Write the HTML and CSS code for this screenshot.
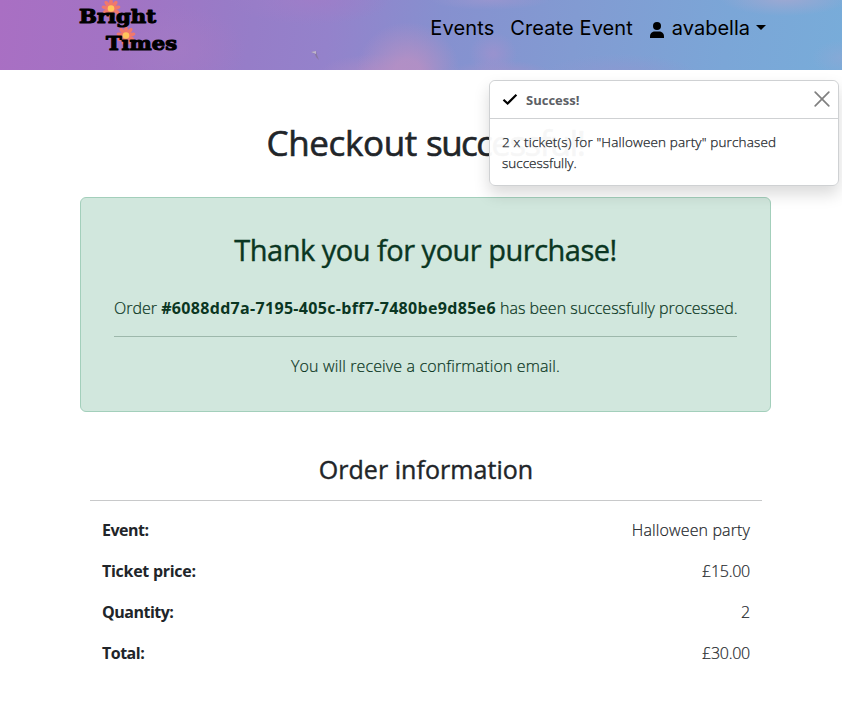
FILE: index.html
```html
<!DOCTYPE html>
<html lang="en">
<head>
<meta charset="utf-8">
<title>Bright Times - Checkout</title>
<link rel="stylesheet" href="styles.css">
</head>
<body>
<header class="navbar">
  <a class="logo">
    <svg width="104" height="56" viewBox="0 0 104 56">
      <defs>
        <g id="petals" fill="#f0786c">
          <ellipse cy="-5.500" rx="1.900" ry="4"/>
          <ellipse cy="-5.500" rx="1.900" ry="4" transform="rotate(40)"/>
          <ellipse cy="-5.500" rx="1.900" ry="4" transform="rotate(80)"/>
          <ellipse cy="-5.500" rx="1.900" ry="4" transform="rotate(120)"/>
          <ellipse cy="-5.500" rx="1.900" ry="4" transform="rotate(160)"/>
          <ellipse cy="-5.500" rx="1.900" ry="4" transform="rotate(200)"/>
          <ellipse cy="-5.500" rx="1.900" ry="4" transform="rotate(240)"/>
          <ellipse cy="-5.500" rx="1.900" ry="4" transform="rotate(280)"/>
          <ellipse cy="-5.500" rx="1.900" ry="4" transform="rotate(320)"/>
        </g>
      </defs>
      <use href="#petals" x="34" y="8.500"/>
      <use href="#petals" x="49" y="35.500"/>
      <text class="logo-text" x="2" y="22.700" textLength="77" lengthAdjust="spacingAndGlyphs">Brıght</text>
      <text class="logo-text" x="29" y="49.700" textLength="71" lengthAdjust="spacingAndGlyphs">Tımes</text>
      <circle cx="34" cy="8.500" r="3.300" fill="#ffc65c"/>
      <circle cx="49" cy="35.500" r="3.300" fill="#ffc65c"/>
    </svg>
  </a>
  <svg class="bird" width="10" height="12" viewBox="0 0 10 12"><path d="M0 2 5 1 6 5 8 10 5 7 4 4Z" fill="#8878a0"/><path d="M0 2 5 1 5 4Z" fill="#c0b6cc"/></svg>
  <nav class="links">
    <a class="events">Events</a>
    <a class="create">Create Event</a>
    <a class="user">
      <svg width="14" height="16" viewBox="0 0 14 16"><circle cx="7" cy="4" r="4"/><path d="M0 16v-1.6C0 11.300 2.300 9.500 5 9.500h4c2.700 0 5 1.800 5 4.900V16Z"/></svg>
      <span class="username">avabella</span>
      <span class="caret"></span>
    </a>
  </nav>
</header>

<main>
  <h1><span class="h1-first">Checkout</span> <span class="h1-second">successful!</span></h1>
  <section class="alert">
    <h2>Thank you for your purchase!</h2>
    <p class="order-line">Order <strong>#6088dd7a-7195-405c-bff7-7480be9d85e6</strong> has been successfully processed.</p>
    <hr>
    <p class="mail-line">You will receive a confirmation email.</p>
  </section>
  <section class="order">
    <h3>Order information</h3>
    <dl>
      <div class="row"><dt>Event:</dt><dd class="name">Halloween party</dd></div>
      <div class="row"><dt class="price">Ticket price:</dt><dd>£15.00</dd></div>
      <div class="row"><dt>Quantity:</dt><dd>2</dd></div>
      <div class="row"><dt>Total:</dt><dd>£30.00</dd></div>
    </dl>
  </section>
</main>

<aside class="toast">
  <div class="toast-header">
    <svg width="16" height="14" viewBox="0 0 16 14"><path d="M1.500 6.700 5.600 10.500 14.400 1.800" fill="none" stroke="#000" stroke-width="2.200"/></svg>
    <strong>Success!</strong>
    <svg class="close" width="16" height="16" viewBox="0 0 16 16"><path d="M1.200 1.200 14.800 14.800M14.800 1.200 1.200 14.800" stroke="#808080" stroke-width="1.700" stroke-linecap="round"/></svg>
  </div>
  <div class="toast-body"><div class="msg-1">2 x ticket(s) for "Halloween party" purchased</div><div class="msg-2">successfully.</div></div>
</aside>
</body>
</html>
```
FILE: styles.css
```css
* { box-sizing: border-box; }
body {
  margin: 0;
  background: #fff;
  color: #212529;
  font: 300 16px/24px "Open Sans", "Noto Sans", sans-serif;
}
h1, h2, h3, p, dl, dd { margin: 0; }
h1, h2, h3 { font-weight: 500; text-align: center; white-space: nowrap; -webkit-text-stroke: .4px currentColor; }
p, dd { -webkit-text-stroke: .2px currentColor; }
p strong { -webkit-text-stroke: 0; }

.navbar {
  position: relative;
  display: flex;
  justify-content: space-between;
  height: 70px;
  padding: 0 76px 0 77px;
  background:
    radial-gradient(ellipse 52px 50px at 408px 72px, rgba(182, 144, 196, .85) 25%, transparent 100%),
    radial-gradient(ellipse 60px 20px at 378px 74px, rgba(172, 138, 198, .7) 20%, transparent 100%),
    radial-gradient(ellipse 24px 22px at 493px 54px, rgba(156, 146, 206, .8) 10%, transparent 100%),
    radial-gradient(ellipse 55px 16px at 500px 76px, rgba(158, 146, 203, .8) 20%, transparent 100%),
    radial-gradient(ellipse 60px 10px at 490px 0, rgba(155, 150, 207, .8) 0%, transparent 100%),
    radial-gradient(ellipse 65px 18px at 785px -2px, rgba(158, 168, 210, .9) 10%, transparent 100%),
    radial-gradient(ellipse 30px 18px at 842px 58px, rgba(140, 168, 213, .7) 0%, transparent 100%),
    radial-gradient(ellipse 80px 22px at 620px 76px, rgba(145, 150, 208, .7) 0%, transparent 100%),
    radial-gradient(ellipse 80px 25px at 310px 0, rgba(160, 125, 200, .8) 0%, transparent 100%),
    radial-gradient(ellipse 70px 45px at 175px 50px, rgba(165, 123, 196, .7) 0%, transparent 100%),
    linear-gradient(97deg, #a96fc3 0%, #a174c4 16%, #967dc8 30%, #9482cb 39%, #8690cf 52%, #829bd2 68%, #7ba6d7 86%, #78acd9 100%);
}
.logo { width: 104px; height: 56px; }
.logo-text { font: 700 18.5px "DejaVu Serif", serif; stroke: #000; stroke-width: 1.1; stroke-linejoin: round; }
.bird { position: absolute; left: 311px; top: 50px; }
.links {
  display: flex;
  align-items: flex-start;
  padding-top: 13px;
  color: #000;
  font: 400 20px/30px Inter, sans-serif;
  white-space: nowrap;
}
.events { margin-right: 16px; letter-spacing: .13px; }
.create { margin-right: 17px; letter-spacing: .09px; }
.user { display: flex; }
.user > svg { margin: 9px 8px 0 0; }
.caret {
  width: 0;
  height: 0;
  margin: 12px 0 0 6px;
  border: 5px solid transparent;
  border-top-color: #000;
  border-bottom: 0;
}

main { width: 691px; margin-left: 80px; padding-top: 52px; }
h1 { font-size: 35px; line-height: 42px; -webkit-text-stroke-width: .6px; }
.h1-first { letter-spacing: -.35px; }
.h1-second { letter-spacing: -1.6px; }
.alert {
  height: 215px;
  margin-top: 33px;
  padding: 33px;
  background: #d1e7dd;
  border: 1px solid #a3cfbb;
  border-radius: 6px;
  color: #0a3622;
  text-align: center;
  white-space: nowrap;
}
h2 { font-size: 29px; line-height: 38px; letter-spacing: -.5px; }
.order-line { margin-top: 27px; }
.order-line strong { font-weight: 700; letter-spacing: .32px; }
hr { margin: 16px 0 17px; border: 0; border-top: 1px solid #9db8ab; }
.mail-line { letter-spacing: .13px; }
.order { padding: 0 9px 0 10px; margin-top: 41px; }
h3 { font-size: 25px; line-height: 32px; letter-spacing: .05px; }
dl { margin-top: 15px; border-top: 1px solid #c8c9ca; padding: 9px 12px 0; }
.row { display: flex; justify-content: space-between; height: 41px; padding-top: 8px; }
dt { font-weight: 700; letter-spacing: -.5px; }
.price { letter-spacing: -.28px; }
dd { letter-spacing: -.25px; }
.name { letter-spacing: .13px; }

.toast {
  position: absolute;
  left: 489px;
  top: 80px;
  width: 350px;
  height: 106px;
  border: 1px solid #cfd1d3;
  border-radius: 6px;
  background: rgba(255, 255, 255, .96);
  box-shadow: 0 8px 16px rgba(0, 0, 0, .15);
  line-height: 21px;
  white-space: nowrap;
}
.toast-header {
  display: flex;
  align-items: center;
  height: 38px;
  padding: 0 8px 0 12px;
  background: #fff;
  border-bottom: 1px solid #cfd1d3;
  border-radius: 6px 6px 0 0;
}
.toast-header strong { margin: 2px 0 0 8px; color: #5c6065; font-size: 13px; font-weight: 700; }
.close { margin: 0 0 2px auto; }
.toast-body { padding: 13px 12px; font-size: 13.5px; font-weight: 300; -webkit-text-stroke: .25px currentColor; }
.msg-1 { letter-spacing: .15px; }
```
